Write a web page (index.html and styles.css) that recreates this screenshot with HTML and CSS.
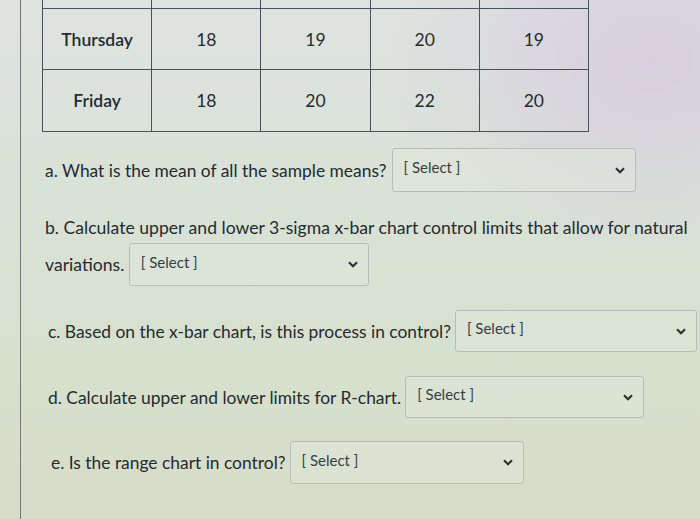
FILE: index.html
```html
<!DOCTYPE html>
<html lang="en">
<head>
<meta charset="utf-8">
<title>Quiz</title>
<link rel="stylesheet" href="styles.css">
</head>
<body>
<div class="page">
  <table class="data">
    <tr class="clip"><td></td><td></td><td></td><td></td><td></td></tr>
    <tr class="row1"><td>Thursday</td><td>18</td><td>19</td><td>20</td><td>19</td></tr>
    <tr class="row2"><td>Friday</td><td>18</td><td>20</td><td>22</td><td>20</td></tr>
  </table>

  <div class="q q-a">
    <span class="qtext">a. What is the mean of all the sample means?</span>
    <div class="select sel-a"><span class="ph">[ Select ]</span><svg class="chev" viewBox="0 0 10 7"><path d="M1 1.2 L5 5.2 L9 1.2"/></svg></div>
  </div>

  <p class="q-b"><span>b. Calculate upper and lower 3-sigma x-bar chart control limits that allow for natural</span> <span>variations.</span> <span class="select sel-b"><span class="ph">[ Select ]</span><svg class="chev" viewBox="0 0 10 7"><path d="M1 1.2 L5 5.2 L9 1.2"/></svg></span></p>

  <div class="q q-c">
    <span class="qtext">c. Based on the x-bar chart, is this process in control?</span>
    <div class="select sel-c"><span class="ph">[ Select ]</span><svg class="chev" viewBox="0 0 10 7"><path d="M1 1.2 L5 5.2 L9 1.2"/></svg></div>
  </div>

  <div class="q q-d">
    <span class="qtext">d. Calculate upper and lower limits for R-chart.</span>
    <div class="select sel-d"><span class="ph">[ Select ]</span><svg class="chev" viewBox="0 0 10 7"><path d="M1 1.2 L5 5.2 L9 1.2"/></svg></div>
  </div>

  <div class="q q-e">
    <span class="qtext">e. Is the range chart in control?</span>
    <div class="select sel-e"><span class="ph">[ Select ]</span><svg class="chev" viewBox="0 0 10 7"><path d="M1 1.2 L5 5.2 L9 1.2"/></svg></div>
  </div>
</div>
</body>
</html>
```

FILE: styles.css
```css
html, body {
  margin: 0;
  padding: 0;
}
body {
  width: 700px;
  height: 519px;
  overflow: hidden;
  font-family: Lato, "Noto Sans", sans-serif;
  color: #252b31;
  background:
    radial-gradient(ellipse 260px 200px at 650px 60px, rgba(214, 202, 222, 0.8), rgba(214, 202, 222, 0) 100%),
    linear-gradient(180deg, #dee3e0 0%, #d9e2d6 40%, #d6e0cc 75%, #d8dcc8 100%);
}
.page {
  margin-left: 20px;
  height: 519px;
  border-left: 1px solid #70787a;
  padding-left: 21px;
  box-sizing: border-box;
}
.data {
  border-collapse: collapse;
  table-layout: fixed;
  width: 547px;
  font-size: 17.5px;
  color: #262b32;
}
.data td {
  border: 1px solid #4a5259;
  text-align: center;
  padding: 0;
}
.data tr.clip td {
  height: 8px;
  border-top: none;
}
.data tr.row1 td {
  height: 60px;
}
.data tr.row2 td {
  height: 61px;
}
.data tr td:first-child {
  font-weight: 600;
}
.q {
  display: flex;
  align-items: center;
  font-size: 17.4px;
}
.qtext {
  white-space: nowrap;
}
.select {
  display: inline-flex;
  align-items: center;
  justify-content: space-between;
  box-sizing: border-box;
  border: 1px solid #b6bdb7;
  border-radius: 3px;
  background: rgba(226, 232, 222, 0.45);
  padding: 0 10px 0 11px;
  font-size: 15px;
  line-height: 18px;
  color: #343e48;
}
.ph {
  margin-top: -6px;
}
.chev {
  width: 10px;
  height: 7px;
  fill: none;
  stroke: #2c3238;
  stroke-width: 2.2;
}
.q-a {
  margin-top: 16px;
  margin-left: 3px;
}
.sel-a {
  width: 244px;
  height: 44px;
  margin-left: 5px;
}
.q-b {
  margin: 17px 0 0 3px;
  font-size: 17.6px;
  line-height: 37px;
  width: 656px;
}
.sel-b {
  width: 240px;
  height: 43px;
  vertical-align: middle;
  margin-top: -4px;
}
.q-c {
  margin-top: 24px;
  margin-left: 6px;
}
.sel-c {
  width: 242px;
  height: 42px;
  margin-left: 4px;
}
.q-d {
  margin-top: 24px;
  margin-left: 6px;
}
.sel-d {
  width: 239px;
  height: 42px;
  margin-left: 4px;
}
.q-e {
  margin-top: 23px;
  margin-left: 9px;
}
.sel-e {
  width: 234px;
  height: 43px;
  margin-left: 4px;
}
```
